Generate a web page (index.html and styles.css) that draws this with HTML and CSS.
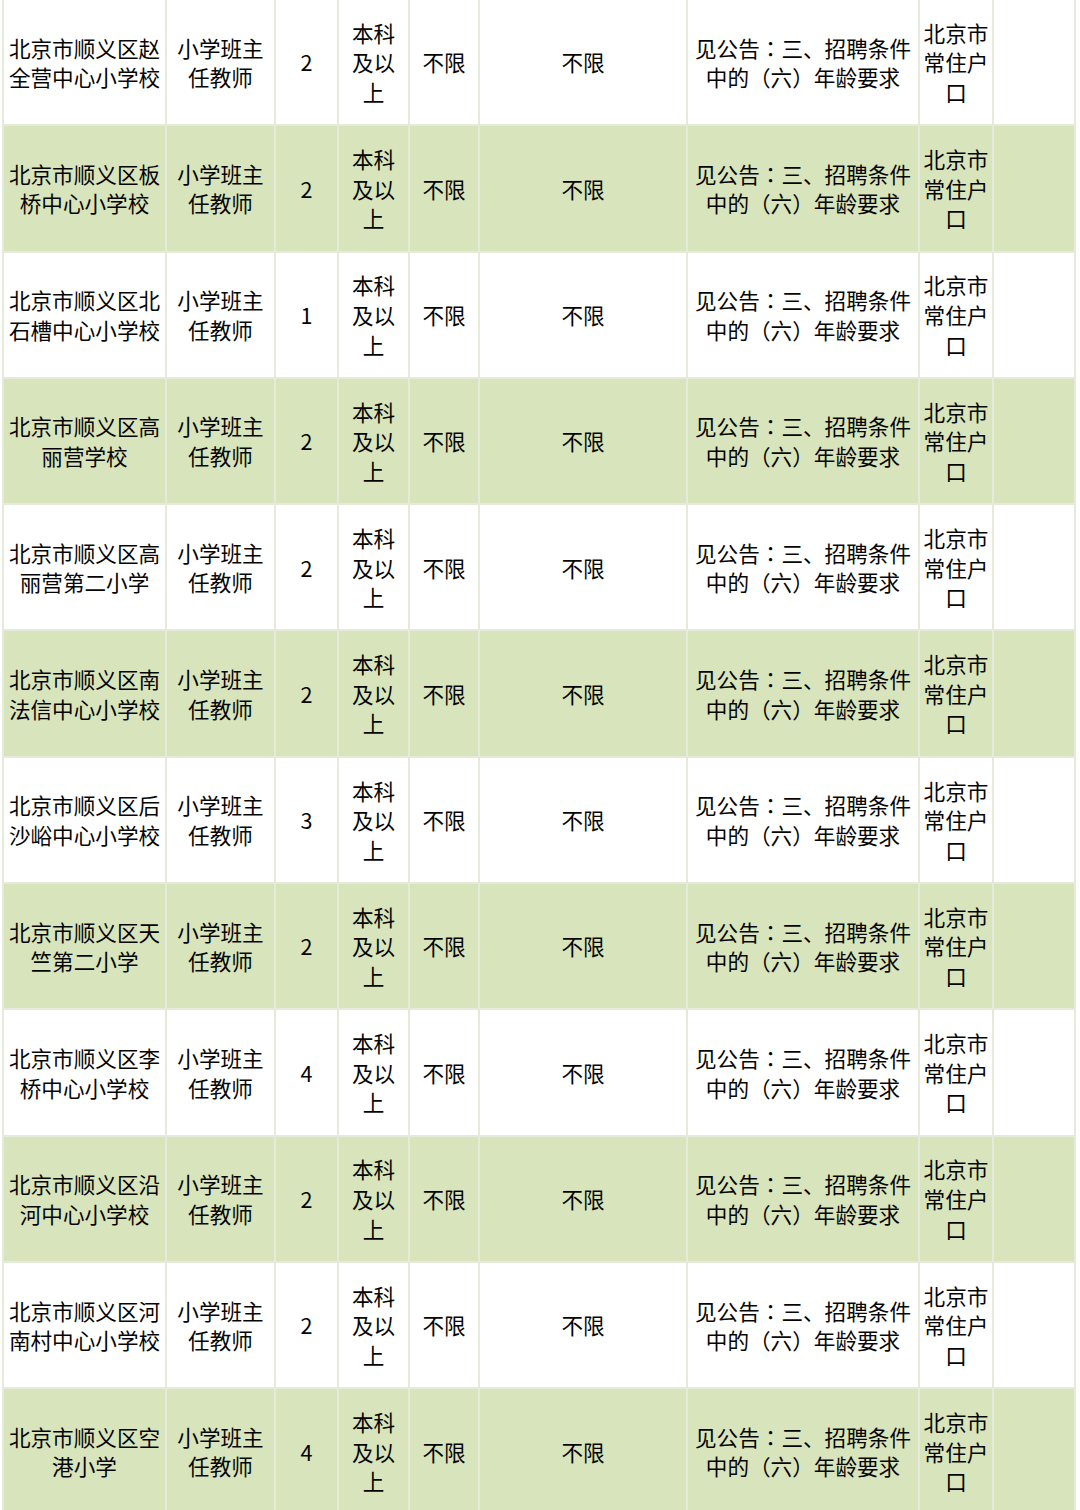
FILE: index.html
```html
<!DOCTYPE html>
<html lang="zh-CN">
<head>
<meta charset="utf-8">
<title>招聘岗位表</title>
<link rel="stylesheet" href="styles.css">
</head>
<body>
<div class="sheet">
  <div class="row"><div class="c">北京市顺义区赵<br>全营中心小学校</div><div class="c">小学班主<br>任教师</div><div class="c">2</div><div class="c">本科<br>及以<br>上</div><div class="c">不限</div><div class="c">不限</div><div class="c"><div>见公告<span class="p" lang="zh-TW">：</span>三、招聘条件<br>中的（六）年龄要求</div></div><div class="c">北京市<br>常住户<br>口</div><div class="c"></div></div>
  <div class="row alt"><div class="c">北京市顺义区板<br>桥中心小学校</div><div class="c">小学班主<br>任教师</div><div class="c">2</div><div class="c">本科<br>及以<br>上</div><div class="c">不限</div><div class="c">不限</div><div class="c"><div>见公告<span class="p" lang="zh-TW">：</span>三、招聘条件<br>中的（六）年龄要求</div></div><div class="c">北京市<br>常住户<br>口</div><div class="c"></div></div>
  <div class="row"><div class="c">北京市顺义区北<br>石槽中心小学校</div><div class="c">小学班主<br>任教师</div><div class="c">1</div><div class="c">本科<br>及以<br>上</div><div class="c">不限</div><div class="c">不限</div><div class="c"><div>见公告<span class="p" lang="zh-TW">：</span>三、招聘条件<br>中的（六）年龄要求</div></div><div class="c">北京市<br>常住户<br>口</div><div class="c"></div></div>
  <div class="row alt"><div class="c">北京市顺义区高<br>丽营学校</div><div class="c">小学班主<br>任教师</div><div class="c">2</div><div class="c">本科<br>及以<br>上</div><div class="c">不限</div><div class="c">不限</div><div class="c"><div>见公告<span class="p" lang="zh-TW">：</span>三、招聘条件<br>中的（六）年龄要求</div></div><div class="c">北京市<br>常住户<br>口</div><div class="c"></div></div>
  <div class="row"><div class="c">北京市顺义区高<br>丽营第二小学</div><div class="c">小学班主<br>任教师</div><div class="c">2</div><div class="c">本科<br>及以<br>上</div><div class="c">不限</div><div class="c">不限</div><div class="c"><div>见公告<span class="p" lang="zh-TW">：</span>三、招聘条件<br>中的（六）年龄要求</div></div><div class="c">北京市<br>常住户<br>口</div><div class="c"></div></div>
  <div class="row alt"><div class="c">北京市顺义区南<br>法信中心小学校</div><div class="c">小学班主<br>任教师</div><div class="c">2</div><div class="c">本科<br>及以<br>上</div><div class="c">不限</div><div class="c">不限</div><div class="c"><div>见公告<span class="p" lang="zh-TW">：</span>三、招聘条件<br>中的（六）年龄要求</div></div><div class="c">北京市<br>常住户<br>口</div><div class="c"></div></div>
  <div class="row"><div class="c">北京市顺义区后<br>沙峪中心小学校</div><div class="c">小学班主<br>任教师</div><div class="c">3</div><div class="c">本科<br>及以<br>上</div><div class="c">不限</div><div class="c">不限</div><div class="c"><div>见公告<span class="p" lang="zh-TW">：</span>三、招聘条件<br>中的（六）年龄要求</div></div><div class="c">北京市<br>常住户<br>口</div><div class="c"></div></div>
  <div class="row alt"><div class="c">北京市顺义区天<br>竺第二小学</div><div class="c">小学班主<br>任教师</div><div class="c">2</div><div class="c">本科<br>及以<br>上</div><div class="c">不限</div><div class="c">不限</div><div class="c"><div>见公告<span class="p" lang="zh-TW">：</span>三、招聘条件<br>中的（六）年龄要求</div></div><div class="c">北京市<br>常住户<br>口</div><div class="c"></div></div>
  <div class="row"><div class="c">北京市顺义区李<br>桥中心小学校</div><div class="c">小学班主<br>任教师</div><div class="c">4</div><div class="c">本科<br>及以<br>上</div><div class="c">不限</div><div class="c">不限</div><div class="c"><div>见公告<span class="p" lang="zh-TW">：</span>三、招聘条件<br>中的（六）年龄要求</div></div><div class="c">北京市<br>常住户<br>口</div><div class="c"></div></div>
  <div class="row alt"><div class="c">北京市顺义区沿<br>河中心小学校</div><div class="c">小学班主<br>任教师</div><div class="c">2</div><div class="c">本科<br>及以<br>上</div><div class="c">不限</div><div class="c">不限</div><div class="c"><div>见公告<span class="p" lang="zh-TW">：</span>三、招聘条件<br>中的（六）年龄要求</div></div><div class="c">北京市<br>常住户<br>口</div><div class="c"></div></div>
  <div class="row"><div class="c">北京市顺义区河<br>南村中心小学校</div><div class="c">小学班主<br>任教师</div><div class="c">2</div><div class="c">本科<br>及以<br>上</div><div class="c">不限</div><div class="c">不限</div><div class="c"><div>见公告<span class="p" lang="zh-TW">：</span>三、招聘条件<br>中的（六）年龄要求</div></div><div class="c">北京市<br>常住户<br>口</div><div class="c"></div></div>
  <div class="row alt"><div class="c">北京市顺义区空<br>港小学</div><div class="c">小学班主<br>任教师</div><div class="c">4</div><div class="c">本科<br>及以<br>上</div><div class="c">不限</div><div class="c">不限</div><div class="c"><div>见公告<span class="p" lang="zh-TW">：</span>三、招聘条件<br>中的（六）年龄要求</div></div><div class="c">北京市<br>常住户<br>口</div><div class="c"></div></div>
</div>
</body>
</html>
```

FILE: styles.css
```css
html, body {
  margin: 0;
  padding: 0;
  background: #ffffff;
}

body {
  font-family: "Noto Sans CJK SC", "Noto Sans", sans-serif;
  font-size: 21.6px;
  line-height: 29.6px;
  color: #050505;
  overflow: hidden;
  height: 1510px;
}

.sheet {
  display: flex;
  flex-direction: column;
  gap: 2px;
  width: 1074px;
  margin-left: 2px;
  padding: 0 2px 2px 2px;
  box-sizing: border-box;
  background: #e6eadb;
}

.row {
  display: grid;
  grid-template-columns: 161px 107px 61px 69px 68px 206px 230px 72px 80px;
  column-gap: 2px;
  height: 124.3px;
}

.c {
  display: flex;
  align-items: center;
  justify-content: center;
  text-align: center;
  background: #ffffff;
  white-space: nowrap;
}

.row.alt .c {
  background: #d8e4bc;
}

.p {
  font-family: "Noto Sans CJK TC", "Noto Sans CJK SC", sans-serif;
}
```
